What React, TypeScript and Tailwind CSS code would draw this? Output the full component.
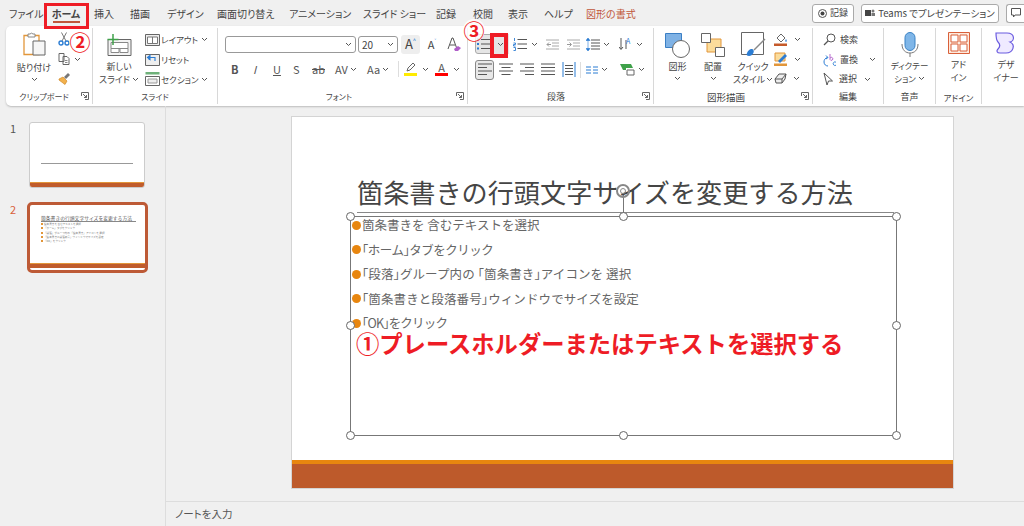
import type { ReactNode } from "react";

const Chev = ({ className = "" }: { className?: string }) => (
  <svg width="7" height="5" viewBox="0 0 7 5" className={`shrink-0 ${className}`}>
    <path d="M1 1l2.5 2.5L6 1" fill="none" stroke="#555" strokeWidth="1" />
  </svg>
);

const Launcher = () => (
  <svg width="8" height="8" viewBox="0 0 8 8" className="shrink-0">
    <path d="M.5 4V.5H7.5V7.5H4M2 2l3.5 3.5M5.5 3v2.5H3" fill="none" stroke="#666" strokeWidth="1" />
  </svg>
);

const Group = ({ label, className, labelClass = "text-[9px]", launcher, children }: { label: string; className: string; labelClass?: string; launcher?: boolean; children: ReactNode }) => (
  <div className={`flex flex-col shrink-0 h-[76px] border-r border-[#d8d8d8] ${className}`}>
    <div className="flex-1 flex min-h-0">{children}</div>
    <div className={`h-[15px] pt-[1px] relative flex items-center justify-center text-[#444] ${labelClass}`}>
      {label}
      {launcher && <span className="absolute right-[3px] top-[3px] flex"><Launcher /></span>}
    </div>
  </div>
);

const Paste = () => (
  <svg width="24" height="24" viewBox="0 0 24 24">
    <path d="M2 3.5h15v19H2z" fill="#fff" stroke="#e2963a" strokeWidth="1.3" />
    <path d="M6 5V2h2a2 2 0 0 1 3 0h2v3z" fill="#fff" stroke="#888" strokeWidth="1" />
    <path d="M11 9h12v14H11z" fill="#f6f6f6" stroke="#666" strokeWidth="1" />
  </svg>
);

const Scissors = () => (
  <svg width="12" height="14" viewBox="0 0 12 14">
    <path d="M3.5 0.5L8 9M8.5 0.5L4 9" stroke="#777" strokeWidth="1" fill="none" />
    <circle cx="3" cy="11" r="2" fill="none" stroke="#2b7cd3" strokeWidth="1.4" />
    <circle cx="9" cy="11" r="2" fill="none" stroke="#2b7cd3" strokeWidth="1.4" />
  </svg>
);

const CopyIcon = () => (
  <svg width="12" height="12" viewBox="0 0 12 12">
    <path d="M1 .5h5v8H1zM5 3.5h4l2 2v6H5z" fill="#fff" stroke="#666" strokeWidth="1" />
    <path d="M7 7.500h2.500M7 9.500h2.500" stroke="#888" />
  </svg>
);

const Brush = () => (
  <svg width="13" height="13" viewBox="0 0 13 13">
    <path d="M1 7l4-2 4 4-2 3.500L1 8z" fill="#f2b14c" stroke="#d18a2a" strokeWidth=".7" />
    <path d="M6 5l4-4 2 2-4 4z" fill="#777" />
  </svg>
);

const NewSlide = () => (
  <svg width="26" height="22" viewBox="0 0 26 22">
    <path d="M2 5.500h23v16H2z" fill="#f3f3f3" stroke="#666" />
    <path d="M5 8.500h17v6H5zM5 14.500h8v4H5zM14 14.500h8v4h-8z" fill="#fff" stroke="#888" />
    <path d="M7 0v11M1.500 5.500h11" stroke="#3fa14a" strokeWidth="1.500" />
  </svg>
);

const Layout = () => (
  <svg width="15" height="12" viewBox="0 0 15 12">
    <path d="M.5.500h14v11H.5z" fill="#eee" stroke="#666" />
    <path d="M2.500 3h10v6.500h-10zM7.500 3v6.500" fill="#fff" stroke="#777" />
  </svg>
);

const Reset = () => (
  <svg width="15" height="13" viewBox="0 0 15 13">
    <path d="M.5 1.500h14v11H.5z" fill="#eee" stroke="#666" />
    <path d="M4 7V4.500h6V8M2.500 4.500L5 2.500v4z" fill="none" stroke="#2b7cd3" strokeWidth="1.100" />
  </svg>
);

const Section = () => (
  <svg width="15" height="14" viewBox="0 0 15 14">
    <path d="M.5 0h14v2.500H.5z" fill="#6fb17a" />
    <path d="M.5 4.500h14v9H.5z" fill="#fff" stroke="#666" />
    <path d="M3 7h9v4H3z" fill="#eee" stroke="#999" />
  </svg>
);

const Bullets = () => (
  <svg width="13" height="14" viewBox="0 0 13 14">
    <path d="M4 2.500h9M4 7h9M4 11.500h9" stroke="#555" strokeWidth="1.100" />
    <path d="M0 1.500h2v2H0zM0 6h2v2H0zM0 10.500h2v2H0z" fill="#2b7cd3" />
  </svg>
);

const Numbered = () => (
  <svg width="14" height="14" viewBox="0 0 14 14">
    <path d="M4.500 2.500H14M4.500 7H14M4.500 11.500H14" stroke="#555" strokeWidth="1.100" />
    <path d="M1.500 1v3M.5 6h2v1.500h-2V9h2M.5 10.500h2v3h-2" fill="none" stroke="#2b7cd3" strokeWidth=".9" />
  </svg>
);

const Indent = ({ right = false }: { right?: boolean }) => (
  <svg width="13" height="11" viewBox="0 0 13 11">
    <path d="M0 1h13M6 4h7M6 7h7M0 10h13" stroke="#aaa" />
    <path d={right ? "M0 5.500h4M2.500 3.500l2 2-2 2" : "M1 5.500h4M3 3.500l-2 2 2 2"} fill="none" stroke="#999" />
  </svg>
);

const LineSp = () => (
  <svg width="14" height="13" viewBox="0 0 14 13">
    <path d="M5 2h9M5 5h9M5 8h9M5 11h9" stroke="#555" />
    <path d="M2 0l2 2.500H0zM2 13l2-2.500H0zM2 2v9" fill="#2b7cd3" stroke="#2b7cd3" strokeWidth=".6" />
  </svg>
);

const Align = ({ kind }: { kind: "l" | "c" | "r" | "j" }) => {
  const d = {
    l: "M0 1h14M0 4.500h9M0 8h14M0 11.500h9",
    c: "M0 1h14M2.500 4.500h9M0 8h14M2.500 11.500h9",
    r: "M0 1h14M5 4.500h9M0 8h14M5 11.500h9",
    j: "M0 1h14M0 4.500h14M0 8h14M0 11.500h14",
  }[kind];
  return (
    <svg width="14" height="13" viewBox="0 0 14 13">
      <path d={d} stroke="#555" strokeWidth="1.100" />
    </svg>
  );
};

const Shapes = () => (
  <svg width="26" height="25" viewBox="0 0 26 25">
    <path d="M.5.500h16v14H.5z" fill="#7fb2e5" stroke="#3b7fc4" />
    <circle cx="16" cy="16" r="8.500" fill="#fff" stroke="#666" />
  </svg>
);

const Arrange = () => (
  <svg width="24" height="24" viewBox="0 0 24 24">
    <path d="M6 6h14v13H6z" fill="#fbdc9b" stroke="#e2963a" />
    <path d="M.5.500h9v9h-9zM14.500 14.500h9v9h-9z" fill="#fff" stroke="#666" />
  </svg>
);

const QuickStyle = () => (
  <svg width="25" height="25" viewBox="0 0 25 25">
    <path d="M.5.500h22v22H.5z" fill="#fff" stroke="#666" />
    <path d="M24 7L13 18" stroke="#888" strokeWidth="1.500" />
    <path d="M8 24c-2 0-3-1-2-3 1-3 4-5 6-3.500 2 1.500 0 6.500-4 6.500z" fill="#2b7cd3" />
  </svg>
);

const FillIcon = () => (
  <svg width="14" height="14" viewBox="0 0 14 14">
    <path d="M3 6l4-4 4 4-4 4z" fill="#fff" stroke="#666" />
    <path d="M12 7c1 1.500 1 2.500 0 3-1-.5-1-1.500 0-3z" fill="#2b7cd3" />
    <path d="M0 11.500h13V14H0z" fill="#c55a2b" />
  </svg>
);

const LineIcon = () => (
  <svg width="14" height="14" viewBox="0 0 14 14">
    <path d="M1 1h10v8H1z" fill="#fbdc9b" stroke="#e2963a" />
    <path d="M4 9l7-7 2 2-7 7z" fill="#2b7cd3" />
    <path d="M0 11.500h13V14H0z" fill="#e2963a" />
  </svg>
);

const EffectIcon = () => (
  <svg width="13" height="11" viewBox="0 0 13 11">
    <path d="M1 6l4-5h7l-1 5-3 4H2z" fill="#eee" stroke="#555" />
    <path d="M1 6h7l4-5M8 6v4" fill="none" stroke="#555" />
  </svg>
);

const SearchIcon = () => (
  <svg width="13" height="13" viewBox="0 0 13 13">
    <circle cx="8" cy="5" r="4" fill="none" stroke="#555" />
    <path d="M5 8l-4 4" stroke="#555" strokeWidth="1.200" />
  </svg>
);

const ReplaceIcon = () => (
  <svg width="14" height="14" viewBox="0 0 14 14">
    <path d="M4.500 3.500C2 4 1 6 1 8c0 2.500 2 4 4 4M3 1.500L5 3.500 3 5" fill="none" stroke="#2b7cd3" strokeWidth="1" transform="matrix(1 0 0 1 0 1)" />
    <path d="M7 1v5.500a1.500 1.500 0 1 0 .1-1.500" fill="none" stroke="#b05ec9" strokeWidth=".9" />
    <path d="M13 9.200a1.800 1.800 0 1 0 0 3" fill="none" stroke="#2b7cd3" strokeWidth=".9" />
  </svg>
);

const SelectIcon = () => (
  <svg width="11" height="14" viewBox="0 0 11 14">
    <path d="M1 1l8.500 8H5.500l-1.500 4z" fill="#fff" stroke="#555" />
  </svg>
);

const Mic = () => (
  <svg width="18" height="26" viewBox="0 0 18 26">
    <rect x="4" y="0.500" width="10" height="18" rx="5" fill="#7fb6e8" stroke="#3b82c4" />
    <path d="M1 12c0 6 3.500 9 8 9s8-3 8-9M9 21v4" fill="none" stroke="#777" />
  </svg>
);

const AddIn = () => (
  <svg width="22" height="22" viewBox="0 0 22 22">
    <path d="M.5.500h21v21H.5z" fill="#fde9dc" stroke="#d9603a" />
    <path d="M3 3h7v7H3zM12 3h7v7h-7zM3 12h7v7H3zM12 12h7v7h-7z" fill="#fff" stroke="#d9603a" />
  </svg>
);

const Designer = () => (
  <svg width="22" height="22" viewBox="0 0 22 22">
    <path d="M1 1h11c8 0 8 8 3 9 6 3 3 11-4 11H5c-3 0-4-2-2-4 2-2 3-4 0-7C1 8 1 4 1 1z" fill="#efeaff" stroke="#6b5ce0" strokeWidth="1.200" />
  </svg>
);

const SmallRow = ({ icon, label, chev, gap = "gap-[1px]", text = "text-[8.500px]" }: { icon: ReactNode; label: string; chev?: boolean; gap?: string; text?: string }) => (
  <div className={`flex items-center h-[20px] text-[#444] ${gap} ${text}`}>
    {icon}
    <span className="whitespace-nowrap">{label}</span>
    {chev && <Chev className="ml-[2px]" />}
  </div>
);

const Handle = ({ className }: { className: string }) => (
  <span className={`absolute w-[9px] h-[9px] rounded-full bg-white border border-[#666] ${className}`} />
);

// brackets sit half width in the reference
const BulletText = ({ text }: { text: string }) => (
  <span>
    {text.split(/([「」])/).map((part, i) =>
      part === "「" || part === "」" ? (
        <span key={i} className="[font-feature-settings:'halt']">{part}</span>
      ) : (
        <span key={i}>{part}</span>
      )
    )}
  </span>
);

const tabs = [
  ["ファイル", "w-[44px] pl-[9px]"],
  ["ホーム", "w-[44px] justify-center font-bold"],
  ["挿入", "w-[36px] pl-[6px]"],
  ["描画", "w-[37px] pl-[6px]"],
  ["デザイン", "w-[56px] pl-[6px]"],
  ["画面切り替え", "w-[72px]"],
  ["アニメーション", "w-[74px]"],
  ["スライド ショー", "w-[73px]"],
  ["記録", "w-[37px]"],
  ["校閲", "w-[35px]"],
  ["表示", "w-[36px]"],
  ["ヘルプ", "w-[42px]"],
];

const bullets = [
  { text: "箇条書きを 含むテキストを選択", track: "" },
  { text: "「ホーム」タブをクリック", track: "tracking-[-0.5px]" },
  { text: "「段落」グループ内の 「箇条書き」アイコンを 選択", track: "tracking-[0.1px]" },
  { text: "「箇条書きと段落番号」ウィンドウでサイズを設定", track: "tracking-[0.1px]" },
  { text: "「OK」をクリック", track: "tracking-[-0.8px]" },
];

export default function App() {
  return (
    <div className="relative w-[1024px] h-[526px] overflow-hidden flex flex-col bg-[#f0f0f0] text-[#444] font-['Noto_Sans_CJK_JP','Noto_Sans',sans-serif] [font-feature-settings:'palt']">
      {/* tabs */}
      <div className="h-[26px] flex items-center shrink-0 text-[10px] text-[#444]">
        {tabs.map(([t, c]) => (
          <div key={t} className={`flex items-center h-full whitespace-nowrap ${c}`}>{t}</div>
        ))}
        <div className="text-[#c0563a] whitespace-nowrap">図形の書式</div>
        <div className="ml-auto flex items-center gap-[7px]">
          <div className="h-[19px] w-[42px] border border-[#aaa] rounded-[3px] bg-white flex items-center justify-center gap-[3px] text-[9px]">
            <svg width="9" height="9" viewBox="0 0 9 9"><circle cx="4.500" cy="4.500" r="4" fill="none" stroke="#555" /><circle cx="4.500" cy="4.500" r="2" fill="#444" /></svg>
            記録
          </div>
          <div className="h-[19px] w-[138px] border border-[#aaa] rounded-[3px] bg-white flex items-center justify-center gap-[3px] text-[9.500px]">
            <svg width="10" height="10" viewBox="0 0 10 10"><path d="M0 2h6v6H0z" fill="#444" /><circle cx="8" cy="3" r="1.500" fill="#777" /><path d="M6.500 5h3.500v3H6.500z" fill="#777" /></svg>
            Teams でプレゼンテーション
          </div>
          <div className="h-[19px] w-[18px] border border-[#aaa] border-r-0 rounded-l-[3px] bg-white flex items-center justify-center">
            <svg width="10" height="10" viewBox="0 0 10 10"><path d="M.5.500h9v6.500H4L2.500 9V7h-2z" fill="none" stroke="#555" /></svg>
          </div>
        </div>
      </div>

      {/* ribbon */}
      <div className="h-[80px] ml-[6px] shrink-0 bg-white rounded-l-[5px] flex pt-[2px] shadow-[0_1px_2px_#bbb] overflow-hidden">
        <Group label="クリップボード" labelClass="text-[8px] pr-[10px]" launcher className="w-[87px]">
          <div className="w-[52px] pl-[4px] flex flex-col items-center pt-[4px] text-[9px] leading-[11px]">
            <Paste />
            <span className="mt-[6px] whitespace-nowrap">貼り付け</span>
            <Chev className="mt-[4px]" />
          </div>
          <div className="flex flex-col gap-[7px] pt-[4px]">
            <Scissors />
            <div className="flex items-center gap-[4px]"><CopyIcon /><Chev /></div>
            <Brush />
          </div>
        </Group>

        <Group label="スライド" labelClass="text-[8px]" className="w-[125px]">
          <div className="w-[52px] flex flex-col items-center pt-[6px] text-[9px] leading-[13px]">
            <NewSlide />
            <span className="mt-[4px]">新しい</span>
            <span className="flex items-center gap-[2px] whitespace-nowrap">スライド<Chev /></span>
          </div>
          <div className="flex flex-col pt-[2px]">
            <SmallRow icon={<Layout />} label="レイアウト" chev />
            <SmallRow icon={<Reset />} label="リセット" />
            <SmallRow icon={<Section />} label="セクション" chev />
          </div>
        </Group>

        <Group label="フォント" labelClass="text-[8px] pr-[14px]" launcher className="w-[250px] pl-[7px]">
          <div className="flex flex-col w-full">
            <div className="flex items-center gap-[2px] h-[18px] mt-[7px]">
              <div className="w-[131px] h-[17px] border border-[#999] rounded-[3px] flex items-center justify-end pr-[3px]"><Chev /></div>
              <div className="w-[40px] h-[17px] border border-[#999] rounded-[3px] flex items-center justify-between px-[3px] text-[10px]">20<Chev /></div>
              <div className="w-[19px] ml-[1px] h-[19px] rounded-[3px] bg-[#eee] flex items-center justify-center text-[13px]">A<sup className="text-[6px] text-[#2b7cd3]">^</sup></div>
              <div className="ml-[3px] w-[14px] flex items-center justify-center text-[11px]">A<sup className="text-[6px] text-[#2b7cd3]">˅</sup></div>
              <div className="ml-[6px] flex">
                <svg width="14" height="15" viewBox="0 0 14 15"><path d="M1 12L5 1h1l4 11M3 8h5" fill="none" stroke="#555" /><path d="M7 12l4-3 3 2-3 3H8z" fill="#b05ec9" /></svg>
              </div>
            </div>
            <div className="flex items-center h-[20px] mt-[6px] text-[11px] text-[#555]">
              <span className="w-[22px] pl-[6px] font-bold">B</span>
              <span className="w-[20px] pl-[6px] italic">I</span>
              <span className="w-[20px] pl-[6px] underline">U</span>
              <span className="w-[20px] pl-[6px]">S</span>
              <span className="w-[24px] pl-[5px] line-through">ab</span>
              <span className="w-[36px] pl-[4px] flex items-center gap-[2px] whitespace-nowrap">AV<Chev /></span>
              <span className="w-[31px] flex items-center gap-[2px]">Aa<Chev /></span>
              <span className="w-[1px] h-[16px] bg-[#ddd] mr-[5px]" />
              <span className="w-[30px] flex items-center gap-[5px]">
                <span className="flex flex-col items-center w-[13px]">
                  <svg width="11" height="10" viewBox="0 0 11 10"><path d="M2 8l1-3 5-5 2 2-5 5z" fill="#fff" stroke="#666" /></svg>
                  <span className="w-[13px] h-[3px] bg-[#ffeb00]" />
                </span>
                <Chev />
              </span>
              <span className="w-[30px] ml-[1px] flex items-center gap-[5px]">
                <span className="flex flex-col items-center w-[13px] leading-[11px] text-[11px]">
                  A
                  <span className="w-[13px] h-[3px] bg-[#ff0000]" />
                </span>
                <Chev />
              </span>
            </div>
          </div>
        </Group>

        <Group label="段落" labelClass="text-[9px] pr-[16px]" launcher className="w-[186px] pl-[7px]">
          <div className="flex flex-col w-full">
            <div className="flex items-center h-[20px] mt-[6px]">
              <div className="w-[17px] h-[20px] rounded-l-[3px] border border-[#aaa] bg-[#e5e5e5] flex items-center justify-center"><Bullets /></div>
              <div className="w-[17px] flex justify-center bg-[#e5e5e5] h-[20px] items-center"><Chev /></div>
              <div className="ml-[4px] flex items-center gap-[4px]"><Numbered /><Chev /></div>
              <div className="ml-[8px] flex items-center gap-[8px]"><Indent /><Indent right /></div>
              <div className="ml-[6px] flex items-center gap-[3px]"><LineSp /><Chev /></div>
              <div className="ml-[9px] flex items-center gap-[3px]">
                <svg width="14" height="14" viewBox="0 0 14 14"><path d="M2 1v11M0 10l2 2.500L4 10M7 12V3" stroke="#555" fill="none" /><text x="7" y="7" fontSize="7" fill="#2b7cd3">A</text></svg>
                <Chev />
              </div>
            </div>
            <div className="flex items-center h-[21px] mt-[5px]">
              <div className="w-[19px] h-[20px] border border-[#888] rounded-[3px] bg-[#e8e8e8] flex items-center justify-center"><Align kind="l" /></div>
              <div className="ml-[3px] w-[17px] flex justify-center"><Align kind="c" /></div>
              <div className="ml-[4px] w-[17px] flex justify-center"><Align kind="r" /></div>
              <div className="ml-[4px] w-[17px] flex justify-center"><Align kind="j" /></div>
              <div className="ml-[4px] w-[17px] flex justify-center">
                <svg width="14" height="15" viewBox="0 0 14 15"><path d="M1 0v15M13 0v15" stroke="#2b7cd3" /><path d="M3 3.500h8M3 6.500h8M3 9.500h8M3 12.500h8" stroke="#555" /></svg>
              </div>
              <span className="ml-[3px] w-[1px] h-[16px] bg-[#ddd]" />
              <div className="ml-[5px] flex items-center gap-[3px]">
                <svg width="12" height="8" viewBox="0 0 12 8"><path d="M0 1h5M7 1h5M0 4h5M7 4h5M0 7h5M7 7h5" stroke="#2b7cd3" /></svg>
                <Chev />
              </div>
              <div className="ml-[12px] flex items-center gap-[3px]">
                <svg width="15" height="13" viewBox="0 0 15 13"><path d="M0 1h11l2 4H6v2H3z" fill="#3fa14a" /><path d="M7 7h7v5H7z" fill="#fff" stroke="#666" /></svg>
                <Chev />
              </div>
            </div>
          </div>
        </Group>

        <Group label="図形描画" labelClass="text-[9.500px] pr-[24px]" launcher className="w-[159px] pl-[10px] text-[9px]">
          <div className="flex w-full leading-[13px]">
            <div className="w-[27px] flex flex-col items-center pt-[5px]">
              <Shapes />
              <span className="mt-[2px] whitespace-nowrap">図形</span>
              <Chev className="mt-[3px]" />
            </div>
            <div className="ml-[10px] w-[24px] flex flex-col items-center pt-[5px]">
              <Arrange />
              <span className="mt-[3px] whitespace-nowrap">配置</span>
              <Chev className="mt-[3px]" />
            </div>
            <div className="ml-[9px] w-[38px] flex flex-col items-center pt-[4px]">
              <QuickStyle />
              <span className="mt-[3px] whitespace-nowrap">クイック</span>
              <span className="flex items-center gap-[1px] whitespace-nowrap">スタイル<Chev /></span>
            </div>
            <div className="ml-[2px] flex flex-col gap-[6px] pt-[4px]">
              <div className="flex items-center gap-[6px]"><FillIcon /><Chev /></div>
              <div className="flex items-center gap-[6px]"><LineIcon /><Chev /></div>
              <div className="flex items-center gap-[6px] mt-[1px]"><EffectIcon /><Chev /></div>
            </div>
          </div>
        </Group>

        <Group label="編集" labelClass="text-[9px] pr-[10px]" className="w-[71px] pl-[10px]">
          <div className="flex flex-col pt-[2px] w-full">
            <SmallRow icon={<SearchIcon />} label="検索" gap="gap-[4px]" text="text-[9px]" />
            <div className="flex items-center h-[20px] text-[9px] gap-[3px]">
              <ReplaceIcon />
              <span>置換</span>
              <Chev className="ml-[8px]" />
            </div>
            <SmallRow icon={<SelectIcon />} label="選択" chev gap="gap-[5px]" text="text-[9px]" />
          </div>
        </Group>

        <Group label="音声" className="w-[52px]">
          <div className="flex flex-col w-full items-center pt-[4px] text-[8.500px] leading-[13px]">
            <Mic />
            <span className="mt-[1px] whitespace-nowrap">ディクテー</span>
            <span className="flex items-center gap-[2px]">ション<Chev /></span>
          </div>
        </Group>

        <Group label="アドイン" labelClass="text-[8.500px]" className="w-[46px]">
          <div className="flex flex-col w-full items-center pt-[4px] text-[9px] leading-[13px]">
            <AddIn />
            <span className="mt-[4px]">アド</span>
            <span>イン</span>
          </div>
        </Group>

        <div className="flex flex-col items-center w-[48px] pt-[4px] text-[9px] leading-[13px] shrink-0">
          <Designer />
          <span className="mt-[4px]">デザ</span>
          <span>イナー</span>
        </div>
      </div>

      {/* main */}
      <div className="flex-1 flex min-h-0">
        <div className="w-[166px] shrink-0 border-r border-[#ddd] flex flex-col pt-[16px] pl-[4px]">
          <div className="flex items-start">
            <span className="w-[25px] pl-[6px] text-[11px] leading-[12px] text-[#555]">1</span>
            <div className="w-[116px] h-[66px] rounded-[3px] bg-white border border-[#ccc] flex flex-col overflow-hidden">
              <div className="flex-1 flex items-end px-[11px] pb-[18px]"><div className="w-full h-px bg-[#999]" /></div>
              <div className="h-[1px] bg-[#e2963a]" />
              <div className="h-[4px] bg-[#c05c2c]" />
            </div>
          </div>
          <div className="flex items-start mt-[14px]">
            <span className="w-[23px] pl-[6px] pt-px text-[11px] leading-[12px] text-[#d9603a]">2</span>
            <div className="w-[121px] h-[71px] rounded-[5px] bg-white border-[3px] border-[#bd5a36] flex flex-col overflow-hidden">
              <div className="flex-1 pl-[11px] pr-[9px] pt-[10px] flex flex-col [font-feature-settings:normal]">
                <div className="text-[4.800px] leading-[6px] text-[#555] border-b border-[#888] whitespace-nowrap">箇条書きの行頭文字サイズを変更する方法</div>
                {bullets.map((b) => (
                  <div key={b.text} className="flex items-center gap-[1px] text-[2.600px] leading-[4.300px] text-[#777] whitespace-nowrap">
                    <span className="w-[2px] h-[2px] bg-[#e2963a]" />{b.text}
                  </div>
                ))}
              </div>
              <div className="h-[1px] bg-[#e2963a]" />
              <div className="h-[4px] bg-[#c05c2c] mb-[2px]" />
            </div>
          </div>
        </div>

        <div className="flex-1 flex flex-col min-w-0">
          <div className="flex-1 relative min-h-0">
            {/* slide: free canvas */}
            <div className="absolute left-[125px] top-[10px] w-[663px] h-[373px] bg-white border border-[#d4d4d4] flex flex-col [font-feature-settings:normal]">
              <div className="flex-1 relative">
                <div className="absolute left-[65px] top-[55px] text-[26.150px] leading-[40px] text-[#454545] whitespace-nowrap">箇条書きの行頭文字サイズを変更する方法</div>
                <div className="absolute left-[65px] top-[95px] w-[537px] h-px bg-[#888]" />
                <div className="absolute left-[58px] top-[99px] w-[547px] h-[220px] border border-[#777]">
                  <div className="flex flex-col -mt-[4px] pl-[1px]">
                    {bullets.map((b) => (
                      <div key={b.text} className={`flex items-center h-[24.500px] text-[12.500px] leading-[18px] text-[#666] whitespace-nowrap ${b.track}`}>
                        <span className="w-[9px] h-[9px] rounded-full bg-[#e8860f] mr-px shrink-0" />
                        <BulletText text={b.text} />
                      </div>
                    ))}
                  </div>
                  <div className="absolute left-[5px] top-[113px] text-[23.300px] leading-[26px] font-bold text-[#ee1c25] whitespace-nowrap">①プレースホルダーまたはテキストを選択する</div>
                  <Handle className="-left-[5px] -top-[5px]" />
                  <Handle className="left-[268px] -top-[5px]" />
                  <Handle className="-right-[5px] -top-[5px]" />
                  <Handle className="-left-[5px] top-[104px]" />
                  <Handle className="-right-[5px] top-[104px]" />
                  <Handle className="-left-[5px] -bottom-[5px]" />
                  <Handle className="left-[268px] -bottom-[5px]" />
                  <Handle className="-right-[5px] -bottom-[5px]" />
                  <span className="absolute left-[272px] -top-[22px] w-px h-[18px] bg-[#777]" />
                  <span className="absolute left-[265px] -top-[33px] w-[14px] h-[14px] rounded-full border-2 border-[#888] flex items-center justify-center">
                    <span className="w-[6px] h-[6px] rounded-full border border-[#888]" />
                  </span>
                </div>
              </div>
              <div className="h-[4px] bg-[#e8860f]" />
              <div className="h-[24px] bg-[#bd5a2b]" />
            </div>
          </div>
          <div className="h-[25px] shrink-0 border-t border-[#ddd] flex items-center pl-[9px] text-[10.500px] text-[#555]">ノートを入力</div>
        </div>
      </div>

      {/* annotations */}
      <div className="absolute left-[44px] top-[3px] w-[45px] h-[26px] border-[3px] border-[#ee1c25]" />
      <div className="absolute left-[53px] top-[21px] w-[27px] h-[2px] bg-[#c0563a]" />
      <div className="absolute left-[490px] top-[33px] w-[18px] h-[25px] border-[4px] border-[#ee1c25]" />
      <div className="absolute left-[69px] top-[30px] w-[22px] h-[22px] rounded-full bg-white/80 flex items-center justify-center text-[#ee1c25] text-[21px] font-bold leading-none">②</div>
      <div className="absolute left-[463px] top-[19px] w-[22px] h-[22px] rounded-full bg-white/80 flex items-center justify-center text-[#ee1c25] text-[21px] font-bold leading-none">③</div>
    </div>
  );
}
